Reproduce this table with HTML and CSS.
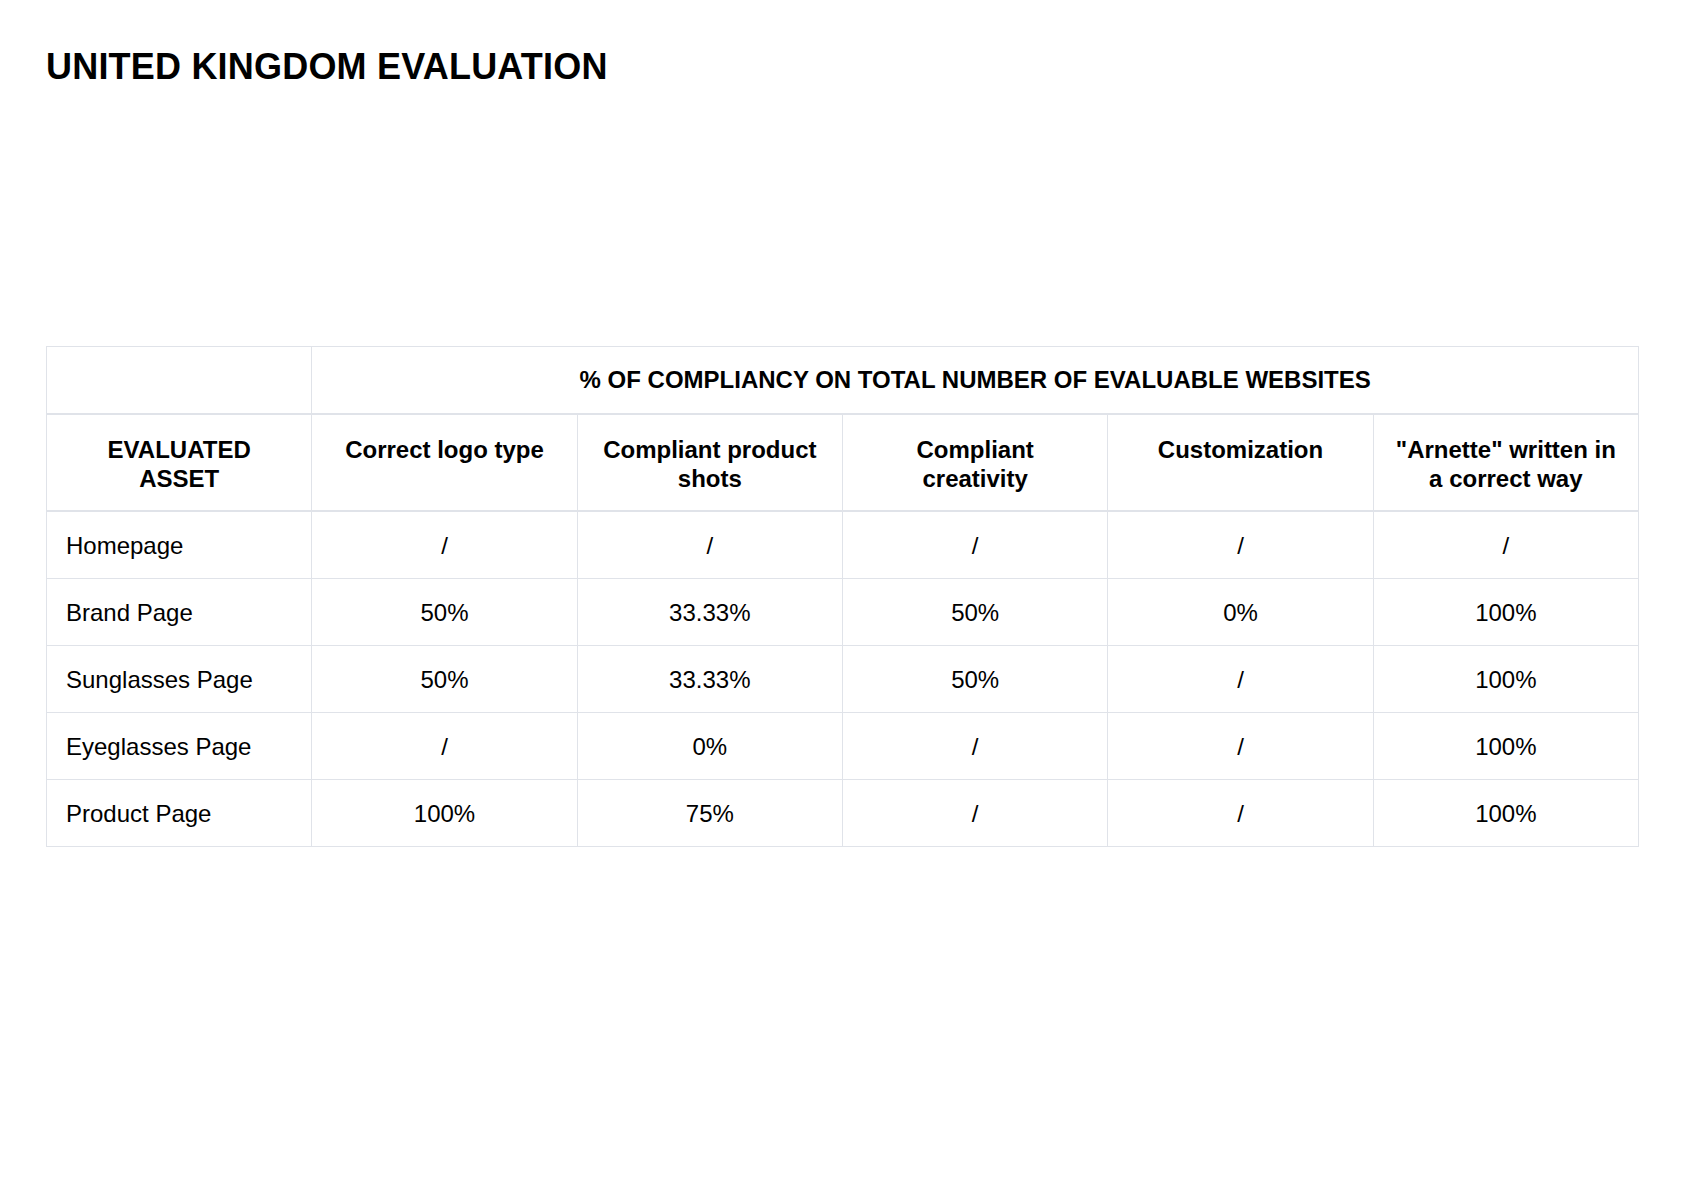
FILE: index.html
```html
<!DOCTYPE html>
<html lang="en">
<head>
<meta charset="utf-8">
<title>United Kingdom Evaluation</title>
<link rel="stylesheet" href="styles.css">
</head>
<body>
<main class="page">
  <h1 class="title">UNITED KINGDOM EVALUATION</h1>
  <table class="eval">
    <colgroup>
      <col class="c"><col class="c"><col class="c"><col class="c"><col class="c"><col class="c">
    </colgroup>
    <thead>
      <tr class="group">
        <th></th>
        <th colspan="5">% OF COMPLIANCY ON TOTAL NUMBER OF EVALUABLE WEBSITES</th>
      </tr>
      <tr class="heads">
        <th>EVALUATED<br>ASSET</th>
        <th>Correct logo type</th>
        <th>Compliant product shots</th>
        <th>Compliant creativity</th>
        <th>Customization</th>
        <th>"Arnette" written in a correct way</th>
      </tr>
    </thead>
    <tbody>
      <tr><td class="name">Homepage</td><td>/</td><td>/</td><td>/</td><td>/</td><td>/</td></tr>
      <tr><td class="name">Brand Page</td><td>50%</td><td>33.33%</td><td>50%</td><td>0%</td><td>100%</td></tr>
      <tr><td class="name">Sunglasses Page</td><td>50%</td><td>33.33%</td><td>50%</td><td>/</td><td>100%</td></tr>
      <tr><td class="name">Eyeglasses Page</td><td>/</td><td>0%</td><td>/</td><td>/</td><td>100%</td></tr>
      <tr><td class="name">Product Page</td><td>100%</td><td>75%</td><td>/</td><td>/</td><td>100%</td></tr>
    </tbody>
  </table>
</main>
</body>
</html>
```
FILE: styles.css
```css
html, body {
  margin: 0;
  padding: 0;
  background: #ffffff;
}

body {
  font-family: "Liberation Sans", Arial, Helvetica, sans-serif;
  color: #000000;
}

.page {
  padding: 47px 45px 0 46px;
}

.title {
  margin: 0;
  font-size: 36px;
  line-height: 40px;
  font-weight: 700;
  letter-spacing: 0.2px;
}

.eval {
  margin-top: 259px;
  width: 1593px;
  table-layout: fixed;
  border-collapse: collapse;
  font-size: 24px;
  line-height: 28px;
}

.eval th,
.eval td {
  border: 1px solid #e0e3e9;
  text-align: center;
}

.eval th {
  font-weight: 700;
  vertical-align: top;
  padding: 20px 20px 17px;
  line-height: 29px;
  border-bottom-width: 2px;
}

.eval .group th {
  padding: 19px 20px 19px;
  line-height: 28px;
}

.eval td {
  padding: 20px 14px 18px;
  font-weight: 400;
  vertical-align: middle;
}

.eval td.name {
  text-align: left;
  padding-left: 19px;
}
```
